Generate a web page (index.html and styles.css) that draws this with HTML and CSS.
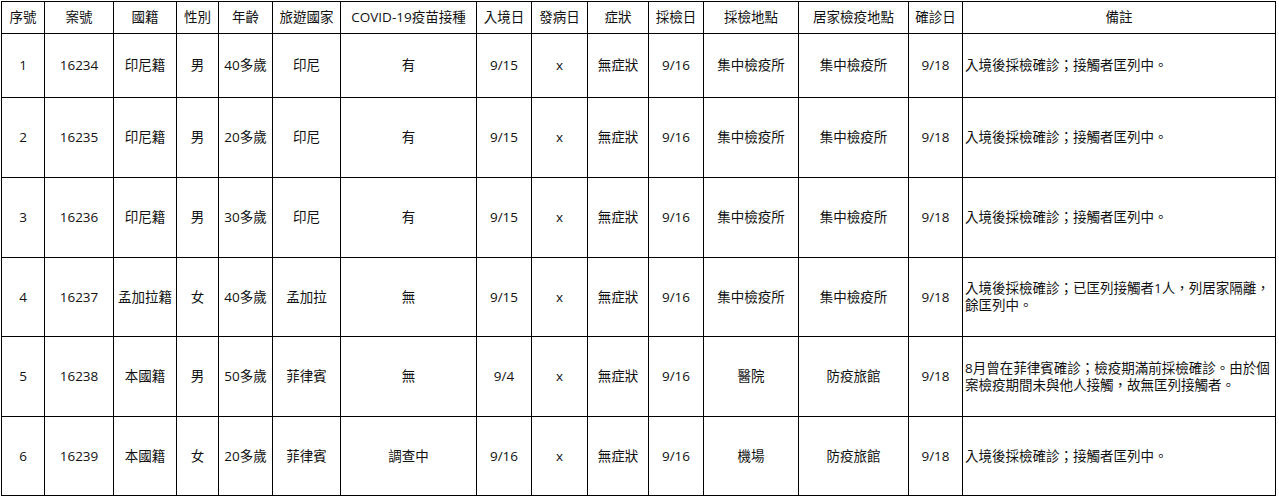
FILE: index.html
```html
<!DOCTYPE html>
<html lang="zh-TW">
<head>
<meta charset="utf-8">
<title>確診個案列表</title>
<link rel="stylesheet" href="styles.css">
</head>
<body>
<table class="cases">
  <colgroup>
    <col class="c-seq"><col class="c-id"><col class="c-nat"><col class="c-sex"><col class="c-age"><col class="c-travel"><col class="c-vac"><col class="c-entry"><col class="c-onset"><col class="c-sym"><col class="c-test"><col class="c-place"><col class="c-quar"><col class="c-conf"><col class="c-note">
  </colgroup>
  <thead>
    <tr class="head">
      <th>序號</th><th>案號</th><th>國籍</th><th>性別</th><th>年齡</th><th>旅遊國家</th><th>COVID-19疫苗接種</th><th>入境日</th><th>發病日</th><th>症狀</th><th>採檢日</th><th>採檢地點</th><th>居家檢疫地點</th><th>確診日</th><th>備註</th>
    </tr>
  </thead>
  <tbody>
    <tr class="r1">
      <td>1</td><td>16234</td><td>印尼籍</td><td>男</td><td>40多歲</td><td>印尼</td><td>有</td><td>9/15</td><td>x</td><td>無症狀</td><td>9/16</td><td>集中檢疫所</td><td>集中檢疫所</td><td>9/18</td><td class="note">入境後採檢確診；接觸者匡列中。</td>
    </tr>
    <tr class="r-full">
      <td>2</td><td>16235</td><td>印尼籍</td><td>男</td><td>20多歲</td><td>印尼</td><td>有</td><td>9/15</td><td>x</td><td>無症狀</td><td>9/16</td><td>集中檢疫所</td><td>集中檢疫所</td><td>9/18</td><td class="note">入境後採檢確診；接觸者匡列中。</td>
    </tr>
    <tr class="r-full">
      <td>3</td><td>16236</td><td>印尼籍</td><td>男</td><td>30多歲</td><td>印尼</td><td>有</td><td>9/15</td><td>x</td><td>無症狀</td><td>9/16</td><td>集中檢疫所</td><td>集中檢疫所</td><td>9/18</td><td class="note">入境後採檢確診；接觸者匡列中。</td>
    </tr>
    <tr class="r-short">
      <td>4</td><td>16237</td><td>孟加拉籍</td><td>女</td><td>40多歲</td><td>孟加拉</td><td>無</td><td>9/15</td><td>x</td><td>無症狀</td><td>9/16</td><td>集中檢疫所</td><td>集中檢疫所</td><td>9/18</td><td class="note">入境後採檢確診；已匡列接觸者1人，列居家隔離，<br>餘匡列中。</td>
    </tr>
    <tr class="r-full">
      <td>5</td><td>16238</td><td>本國籍</td><td>男</td><td>50多歲</td><td>菲律賓</td><td>無</td><td>9/4</td><td>x</td><td>無症狀</td><td>9/16</td><td>醫院</td><td>防疫旅館</td><td>9/18</td><td class="note">8月曾在菲律賓確診；檢疫期滿前採檢確診。由於個<br>案檢疫期間未與他人接觸，故無匡列接觸者。</td>
    </tr>
    <tr class="r-short">
      <td>6</td><td>16239</td><td>本國籍</td><td>女</td><td>20多歲</td><td>菲律賓</td><td>調查中</td><td>9/16</td><td>x</td><td>無症狀</td><td>9/16</td><td>機場</td><td>防疫旅館</td><td>9/18</td><td class="note">入境後採檢確診；接觸者匡列中。</td>
    </tr>
  </tbody>
</table>
</body>
</html>
```

FILE: styles.css
```css
html, body {
  background: #ffffff;
}
body {
  margin: 0;
  padding: 1px 0 0 1px;
  font-family: "Open Sans", "Noto Sans CJK TC", sans-serif;
  font-size: 13.5px;
  color: #111111;
}
.cases {
  border-collapse: collapse;
  table-layout: fixed;
  width: 1275px;
}
.cases th,
.cases td {
  border: 1px solid #000000;
  padding: 0 3px;
  text-align: center;
  vertical-align: middle;
  font-weight: normal;
  line-height: 17px;
  white-space: nowrap;
  overflow: hidden;
}
.cases .note {
  text-align: left;
  padding-left: 2px;
}
.head th { height: 30px; padding-bottom: 1px; }
.r1 td { height: 63px; }
.r-full td { height: 79px; }
.r-short td { height: 78px; }

.c-seq { width: 43px; }
.c-id { width: 69px; }
.c-nat { width: 63px; }
.c-sex { width: 42px; }
.c-age { width: 54px; }
.c-travel { width: 68px; }
.c-vac { width: 136px; }
.c-entry { width: 55px; }
.c-onset { width: 56px; }
.c-sym { width: 61px; }
.c-test { width: 55px; }
.c-place { width: 95px; }
.c-quar { width: 110px; }
.c-conf { width: 54px; }
.c-note { width: 313px; }
```
